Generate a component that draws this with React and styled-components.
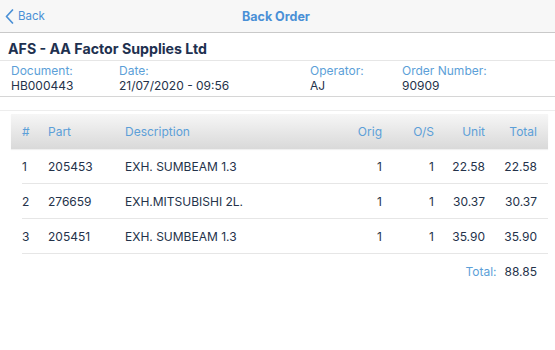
import React from 'react';
import styled, { createGlobalStyle } from 'styled-components';

const GlobalStyle = createGlobalStyle`
  html, body {
    margin: 0;
    padding: 0;
    background: #ffffff;
    font-family: Inter, "Liberation Sans", sans-serif;
  }
`;

const Page = styled.div`
  width: 555px;
  min-height: 350px;
  background: #ffffff;
`;

const NavBar = styled.header`
  height: 32px;
  background: #f7f7f7;
  border-bottom: 1px solid #c9c9c9;
  display: grid;
  grid-template-columns: 1fr auto 1fr;
  align-items: center;
  padding: 0 8px 0 5px;
`;

const BackButton = styled.button`
  display: flex;
  align-items: center;
  gap: 4px;
  border: none;
  background: none;
  padding: 0;
  color: #4a90d6;
  font-family: inherit;
  font-size: 11.5px;
  justify-self: start;
`;

const NavTitle = styled.h1`
  margin: 0;
  font-size: 12.5px;
  font-weight: 700;
  color: #4a90d6;
`;

const Company = styled.h2`
  margin: 0;
  height: 25px;
  padding: 2px 8px 0;
  line-height: 28px;
  font-size: 14.2px;
  font-weight: 700;
  color: #1e3150;
  border-bottom: 1px solid #e6e6e6;
`;

const InfoRow = styled.div`
  display: grid;
  grid-template-columns: 108px 191px 92px 1fr;
  padding: 2px 11px 3px;
  height: 30px;
  border-bottom: 1px solid #d6d6d6;
`;

const Field = styled.div`
  display: flex;
  flex-direction: column;
  font-size: 12px;
  line-height: 15px;
`;

const Label = styled.span`
  color: #5c9fd8;
`;

const Value = styled.span`
  color: #24324a;
`;

const Spacer = styled.div`
  height: 13px;
  border-bottom: 1px solid #ededed;
`;

const Table = styled.div`
  margin: 3px 7px 0 11px;
  font-size: 12px;
`;

const cols = '26px 77px 1fr 52px 52px 51px 52px';

const HeadRow = styled.div`
  display: grid;
  grid-template-columns: ${cols};
  align-items: center;
  height: 35px;
  padding: 0 11px;
  background: linear-gradient(#f6f6f6, #d9d9d9);
  box-shadow: 0 1px 1px rgba(0, 0, 0, 0.06);
  color: #5c9fd8;
`;

const Row = styled.div`
  display: grid;
  grid-template-columns: ${cols};
  align-items: center;
  height: 34px;
  margin-left: 11px;
  padding-right: 11px;
  border-bottom: 1px solid #e6e6e6;
  color: #24324a;
`;

const Cell = styled.span`
  text-align: ${({ $right }) => ($right ? 'right' : 'left')};
  white-space: nowrap;
`;

const TotalRow = styled.div`
  display: flex;
  justify-content: flex-end;
  align-items: center;
  gap: 8px;
  height: 34px;
  padding-right: 11px;
  font-size: 12px;
`;

const items = [
  { n: 1, part: '205453', desc: 'EXH. SUMBEAM 1.3', orig: 1, os: 1, unit: '22.58', total: '22.58' },
  { n: 2, part: '276659', desc: 'EXH.MITSUBISHI 2L.', orig: 1, os: 1, unit: '30.37', total: '30.37' },
  { n: 3, part: '205451', desc: 'EXH. SUMBEAM 1.3', orig: 1, os: 1, unit: '35.90', total: '35.90' },
];

export default function App() {
  return (
    <Page>
      <GlobalStyle />
      <NavBar>
        <BackButton>
          <svg width="9" height="15" viewBox="0 0 9 15">
            <path d="M7.5 1 L1.5 7.5 L7.5 14" fill="none" stroke="#4a90d6" strokeWidth="1.7" strokeLinecap="round" strokeLinejoin="round" />
          </svg>
          Back
        </BackButton>
        <NavTitle>Back Order</NavTitle>
        <span />
      </NavBar>

      <Company>AFS - AA Factor Supplies Ltd</Company>

      <InfoRow>
        <Field><Label>Document:</Label><Value>HB000443</Value></Field>
        <Field><Label>Date:</Label><Value>21/07/2020 - 09:56</Value></Field>
        <Field><Label>Operator:</Label><Value>AJ</Value></Field>
        <Field><Label>Order Number:</Label><Value>90909</Value></Field>
      </InfoRow>

      <Spacer />

      <Table>
        <HeadRow>
          <Cell>#</Cell>
          <Cell>Part</Cell>
          <Cell>Description</Cell>
          <Cell $right>Orig</Cell>
          <Cell $right>O/S</Cell>
          <Cell $right>Unit</Cell>
          <Cell $right>Total</Cell>
        </HeadRow>
        {items.map((it) => (
          <Row key={it.n}>
            <Cell>{it.n}</Cell>
            <Cell>{it.part}</Cell>
            <Cell>{it.desc}</Cell>
            <Cell $right>{it.orig}</Cell>
            <Cell $right>{it.os}</Cell>
            <Cell $right>{it.unit}</Cell>
            <Cell $right>{it.total}</Cell>
          </Row>
        ))}
        <TotalRow>
          <Label>Total:</Label>
          <Value>88.85</Value>
        </TotalRow>
      </Table>
    </Page>
  );
}
